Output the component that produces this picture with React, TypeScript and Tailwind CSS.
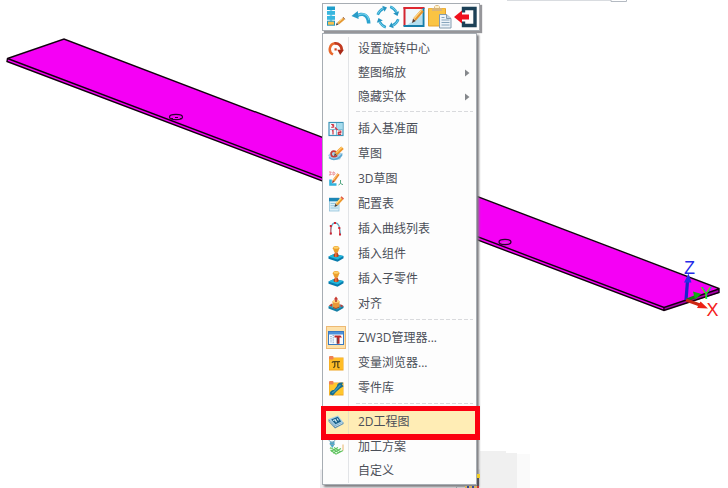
import React from "react";
import clsx from "clsx";

type IconProps = { children: React.ReactNode };

const Icon = ({ children }: IconProps) => (
  <svg width="16" height="16" viewBox="0 0 16 16" fill="none">
    {children}
  </svg>
);

const ToolIcon = ({ children }: IconProps) => (
  <svg width="24" height="24" viewBox="0 0 24 24" fill="none">
    {children}
  </svg>
);

const RotateIcon = () => (
  <Icon>
    <path d="M5 13.500A6 6 0 0 1 7.500 2.200" stroke="#e8682c" strokeWidth="2.500" />
    <path d="M6.500 2.400A6 6 0 0 1 13.600 9" stroke="#c23a20" strokeWidth="2.700" />
    <path d="M9.300 8.800h6.700l-3.800 5.200z" fill="#a92a18" />
    <rect x="6.500" y="7.300" width="2.200" height="2.200" fill="#d8431f" />
  </Icon>
);

const DatumIcon = () => (
  <Icon>
    <rect x="1" y="1.500" width="14" height="13" fill="#f1f9fd" stroke="#3c94b8" strokeWidth="1.200" />
    <rect x="9" y="2" width="5.500" height="6" fill="#a5dced" />
    <path d="M8.500 2v6.500H2M8.500 8.500h6M8.500 8.500V14" stroke="#7fbdd6" />
    <path d="M3.200 3.500h2.500v1.300H4.200h1.500v1.500H3.200" stroke="#cf3544" />
    <path d="M7 6.500l2.500 2.500" stroke="#cf3544" strokeWidth="1.400" />
    <path d="M4 10l1-.5v4M10.200 10h2.600v1.600h-2.500v1.700h2.800" stroke="#cf3544" strokeWidth="1.200" />
  </Icon>
);

const SketchIcon = () => (
  <Icon>
    <path d="M0 9.500L4.500 4.500l10.500 3-3 6-8 .5z" fill="#a6d0e8" />
    <path d="M1 11.500c3 2.800 9 3 13-3" stroke="#5aa6cf" strokeWidth="1.500" />
    <path d="M8 5.800C5 4 2.500 6 3.200 8.700s4 2.600 6 .6" stroke="#c63b35" strokeWidth="1.700" />
    <path d="M8 8L14.500 1.800" stroke="#ef9426" strokeWidth="3.600" />
    <path d="M8.300 6.800L14 1.200" stroke="#ffce6c" strokeWidth="1.200" />
    <path d="M6 10l.8-2.700 1.900 1.800z" fill="#5a3a2a" />
  </Icon>
);

const Sketch3DIcon = () => (
  <Icon>
    <path d="M1 1h2.300L2.200 2.300 3.300 3.500 1 4M5 1v3c2.600 0 2.600-3 0-3" stroke="#ea8a90" />
    <path d="M2.500 8.500v5h6" stroke="#30b2dc" strokeWidth="2.600" />
    <path d="M5.500 10L10.500 3" stroke="#ed8b31" strokeWidth="2.800" />
    <path d="M5.300 9L9.700 3" stroke="#ffd184" />
    <path d="M4 12.300l.6-3 2 1.500z" fill="#8d3935" />
    <path d="M12.500 9v3.500l2.500 1.200M12.500 12.500L10.500 14" stroke="#55a983" />
  </Icon>
);

const ConfigTableIcon = () => (
  <Icon>
    <rect x="1.500" y="2" width="9.500" height="13" fill="#dceff8" stroke="#92c2da" strokeWidth=".8" />
    <rect x="1" y="2" width="10.500" height="3.300" fill="#1c86b5" />
    <path d="M2.500 7.500h7.500M2.500 9.700h7.500M2.500 12h7.500" stroke="#8bc2dc" strokeWidth=".9" />
    <path d="M8.500 8.500l5.500-6" stroke="#eb9a2e" strokeWidth="3.200" />
    <path d="M8.200 7.500l5-5.300" stroke="#ffe08b" strokeWidth="1.200" />
    <path d="M6.500 11l.8-3.200 2.200 1.900z" fill="#4a403b" />
    <path d="M13 .8l2.500 2.300" stroke="#e35943" strokeWidth="1.500" />
  </Icon>
);

const CurveIcon = () => (
  <Icon>
    <path d="M2.800 13.500C2.500 6 4 1.800 7 1.800c4 0 4.500 4 5.500 12" stroke="#69a9c2" strokeWidth="1.300" />
    <path d="M2.800 5v8M11.500 7v7" stroke="#e65056" strokeWidth=".9" />
    <g fill="#cf2330">
      <rect x="1.800" y="4" width="2" height="2" />
      <rect x="1.800" y="11.500" width="2" height="2" />
      <rect x="6" y="1" width="2" height="2" />
      <rect x="10.300" y="6" width="2" height="2" />
      <rect x="11" y="12.500" width="2" height="2" />
    </g>
  </Icon>
);

const StampIcon = () => (
  <Icon>
    <path d="M.5 10.500L6 8l9.500 2v2.300L9.500 15.700.5 12.800z" fill="#087bac" />
    <path d="M.5 10.500L6 8l9.500 2-6 3.500z" fill="#20b8dc" />
    <path d="M5.500 9.500l1.500-3h2.500l1.300 3c0 2.300-5.300 2.300-5.300 0z" fill="#b8401b" />
    <path d="M7 6h1.700v5H7z" fill="#e8703a" />
    <path d="M4.800 2.200c0-3 6.600-3 6.600 0L9.800 6.500H6.500z" fill="#eb9e2c" />
    <ellipse cx="8.100" cy="1.600" rx="2.800" ry="1.200" fill="#ffd36a" />
  </Icon>
);

const AlignIcon = () => (
  <Icon>
    <path d="M.5 10.500L7 7l8.500 3v2L9 15.700.5 12.500z" fill="#147fa5" />
    <path d="M.5 10.500L7 7l8.500 3L9 13.500z" fill="#36aac6" />
    <path d="M4.500 5.500c0-1.600 7-1.600 7 0v5c-1.500 2-5.500 2-7 0z" fill="#e9983a" />
    <ellipse cx="8" cy="5.500" rx="3.300" ry="1.300" fill="#ffd87c" />
    <path d="M8 2v4" stroke="#b13129" strokeWidth="1.500" />
    <path d="M5.800 3.500L8 .5l2.200 3zM.8 9.500l3.200-2v3.300zM12.500 8l3 2.300-3 .7z" fill="#c9392f" />
    <path d="M5 11.500l3 1 3.500-1.500" stroke="#a94625" />
  </Icon>
);

const ManagerIcon = () => (
  <Icon>
    <rect x=".5" y="1.500" width="15" height="13" fill="#f7fbff" stroke="#3979c2" />
    <rect x="1" y="2" width="14" height="2.500" fill="#4c91da" />
    <path d="M3 6v7M5.200 5v9" stroke="#6d91b8" strokeDasharray="1.200 1" />
    <path d="M6.500 7.500V5.500h6l1.500 2h-2.500v6.200H8.800V7.500z" fill="#bc2626" />
    <path d="M9.300 8v5.500" stroke="#5d4651" />
  </Icon>
);

const VariableIcon = () => (
  <Icon>
    <rect x="1" y="2.500" width="14.500" height="13" fill="#efa31f" />
    <rect x="1.500" y="3" width="13.500" height="11.500" fill="#ffbd26" />
    <rect x="1" y="1" width="4.500" height="3.500" rx="1" fill="#ef8052" />
    <path d="M4 7.800c.6-1.100 1-1.100 2-1.100h6M6.800 7v4L5.500 13M9.800 7v4.500c0 1 .5 1.300 1.700.8" stroke="#594819" strokeWidth="1.300" />
  </Icon>
);

const PartLibraryIcon = () => (
  <Icon>
    <rect x="1" y="2.500" width="14.500" height="13" fill="#efa522" />
    <rect x="1.500" y="3" width="13.500" height="11.500" fill="#ffc62c" />
    <rect x="1" y="1" width="4.500" height="3.500" rx="1" fill="#ed8055" />
    <path d="M2 14.500c-.5-3 1.500-4.500 4-4.500l3-4c0-2.800 3-4.300 6.200-3.200l-1.200 1.800 1.500 1.600-3.500 2.300L8 12l-3 3.500z" fill="#176d91" />
    <path d="M4 13c3.500-1.500 5-5 8.500-8" stroke="#3e9dbc" strokeWidth="1.300" />
  </Icon>
);

const DrawingIcon = () => (
  <Icon>
    <path d="M.5 5L10 1.500l5.500 7L7 13z" fill="#a4cee6" />
    <path d="M.5 5L7 11.500l8.500-3.200V10L7 14.500.5 7.500z" fill="#5a8eaf" />
    <path d="M3.200 5.500L9.800 2.800l3.400 4.700-5.700 2.800z" fill="#165e88" />
    <path d="M5 6.500l2.200-.8 1.300 2.500M9 4.500l1.500 2" stroke="#d9f0f8" strokeWidth="1.200" />
    <path d="M1.500 7l5.500 5.500 7.500-3.300" stroke="#e0edf4" strokeWidth=".8" />
  </Icon>
);

const MachiningIcon = () => (
  <Icon>
    <path d="M2.500 11l5.500 4.200 7-3.700M4 9.500l7 4.500M6 8.500l7 4.500M3 12.500l7-4M5 14l8-4.500" stroke="#5dc35c" strokeWidth="1.100" />
    <path d="M15 5.500v6" stroke="#e8b46a" />
    <path d="M2.500 2.500h4v3L4.500 9l-3-4z" fill="#4aa8cb" />
    <path d="M.5 1l3.500 3L7.500 1M2 5.500h4.500" stroke="#7aa3b5" />
    <path d="M1.500 9.500l1.500-2 1.500 3z" fill="#7fcf77" />
  </Icon>
);

const ListEditIcon = () => (
  <ToolIcon>
    <path d="M7 3v17" stroke="#78d2ec" strokeWidth="2.500" />
    <rect x="3" y="1.500" width="8" height="3.500" fill="#1f9ecb" />
    <rect x="3" y="6" width="8" height="3.800" fill="#38b6de" />
    <rect x="3" y="11" width="8" height="3.800" fill="#38b6de" />
    <rect x="3.500" y="16.200" width="7" height="4" fill="#f8c04e" stroke="#2498c2" />
    <path d="M14 18.500l6-5" stroke="#e59a34" strokeWidth="2.700" />
    <path d="M14.200 17.300l4.500-3.700" stroke="#ffd183" />
    <path d="M11.800 20.500l1-2.700 1.800 1.700z" fill="#4e4037" />
    <path d="M18.900 12l2 2.200" stroke="#9c6d55" />
  </ToolIcon>
);

const UndoIcon = () => (
  <ToolIcon>
    <path d="M20.500 18.500C20.500 9 13 5.500 6 9.500l1.500 3C12 9.500 16.500 11 17 18.500z" fill="#2ba3cf" />
    <path d="M19 15C17.500 8.500 12 7.500 7 10.500" stroke="#74cfe9" strokeWidth="1.200" />
    <path d="M1.500 11l6.300-5 .8 8z" fill="#2a9cc8" />
  </ToolIcon>
);

const RecycleIcon = () => (
  <ToolIcon>
    {[0, 90, 180, 270].map((angle) => (
      <g key={angle} transform={`rotate(${angle} 12 12)`}>
        <path d="M1.700 9.800C2.700 7 4.500 5 7.500 3.500" stroke="#2ba1cd" strokeWidth="2.600" />
        <path d="M2 8.800C3 6.500 4.500 4.700 7.300 3.300" stroke="#86d8ee" strokeWidth=".9" />
        <path d="M6.300.8l4.700 1.700-2.500 4.300z" fill="#2694c0" />
      </g>
    ))}
  </ToolIcon>
);

const EditBoxIcon = () => (
  <ToolIcon>
    <path d="M3 4h18v17H3z" fill="#f0f8fc" />
    <path d="M5 20L20 10v10z" fill="#b4dfef" />
    <path d="M1.500 3h21" stroke="#df2830" strokeWidth="2" />
    <path d="M2.500 2v19" stroke="#d32632" strokeWidth="2" />
    <path d="M1.500 21h21M21.500 3v19" stroke="#167eaa" strokeWidth="2" />
    <path d="M12.500 14.500L20.500 5.500" stroke="#e3952f" strokeWidth="3.400" />
    <path d="M12.200 13.500l7.300-8.300" stroke="#ffda8a" strokeWidth="1.200" />
    <path d="M10 18l1-4.200 2.800 2.300z" fill="#5c3c2d" />
  </ToolIcon>
);

const PasteIcon = () => (
  <ToolIcon>
    <rect x="0" y="3" width="18" height="18.500" rx="1" fill="#e6a22c" />
    <rect x="1" y="3.500" width="16" height="17" fill="#fac443" />
    <path d="M4 6V3h2c0-4 6-4 6 0h2v3z" fill="#d9b476" />
    <rect x="7" y="1" width="4" height="2" fill="#fff0c8" />
    <path d="M11.500 9.500h7l4.500 4v9.500H11.500z" fill="#edf3f8" stroke="#839bae" />
    <path d="M18.500 9.500v4h4.500" fill="#c4d4e3" stroke="#839bae" />
    <path d="M13.500 12.500h3M13.500 15h8M13.500 17.500h8M13.500 20h8" stroke="#87a5bc" />
  </ToolIcon>
);

const ExitIcon = () => (
  <ToolIcon>
    <path d="M9.500 7.500V3.500h11.500v17H9.500V16.500" stroke="#1b4056" strokeWidth="3.400" />
    <path d="M0 12l8-6.500v4h7v5H8v4z" fill="#f0101c" />
  </ToolIcon>
);

type MenuEntry = {
  label?: string;
  icon?: React.ReactNode;
  separator?: boolean;
  submenu?: boolean;
  compact?: boolean;
  checked?: boolean;
  active?: boolean;
};

const menuItems: MenuEntry[] = [
  { label: "设置旋转中心", icon: <RotateIcon />, compact: true },
  { label: "整图缩放", submenu: true, compact: true },
  { label: "隐藏实体", submenu: true, compact: true },
  { separator: true, compact: true },
  { label: "插入基准面", icon: <DatumIcon /> },
  { label: "草图", icon: <SketchIcon /> },
  { label: "3D草图", icon: <Sketch3DIcon /> },
  { label: "配置表", icon: <ConfigTableIcon /> },
  { label: "插入曲线列表", icon: <CurveIcon /> },
  { label: "插入组件", icon: <StampIcon /> },
  { label: "插入子零件", icon: <StampIcon /> },
  { label: "对齐", icon: <AlignIcon /> },
  { separator: true },
  { label: "ZW3D管理器...", icon: <ManagerIcon />, checked: true },
  { label: "变量浏览器...", icon: <VariableIcon /> },
  { label: "零件库", icon: <PartLibraryIcon /> },
  { separator: true },
  { label: "2D工程图", icon: <DrawingIcon />, active: true },
  { label: "加工方案", icon: <MachiningIcon /> },
  { label: "自定义", compact: true },
];

const MenuRow = ({ item }: { item: MenuEntry }) => {
  if (item.separator) {
    return (
      <div className={clsx("flex", item.compact ? "h-[7px]" : "h-[9px]")}>
        <div className="h-full w-[26px] border-r border-[#e2e4e7]" />
        <div
          className={clsx(
            "ml-[7px] h-px w-[117px] bg-[repeating-linear-gradient(90deg,#d9dadd_0_4px,transparent_4px_6px)]",
            item.compact ? "mt-[2px]" : "mt-[3px]"
          )}
        />
      </div>
    );
  }

  return (
    <div
      className={clsx(
        "relative flex items-center",
        item.compact ? "h-[24px]" : "h-[25px]",
        item.active && "bg-[#ffedb5]"
      )}
    >
      <div
        className={clsx(
          "flex h-full w-[26px] shrink-0 items-center justify-center border-r",
          item.active ? "border-[#eadfbd]" : "border-[#e2e4e7]"
        )}
      >
        <div
          className={clsx(
            "flex items-center justify-center",
            item.checked && "h-[23px] w-5 shrink-0 border border-[#edb974] bg-[#fde1aa]"
          )}
        >
          {item.icon}
        </div>
      </div>
      <span className="ml-[9px] whitespace-nowrap">{item.label}</span>
      {item.submenu && (
        <svg className="ml-auto mr-[6px]" width="5" height="8" viewBox="0 0 5 8">
          <path d="M0 0.500L4.500 4 0 7.500z" fill="#85888c" />
        </svg>
      )}
      {item.active && (
        <div className="absolute -left-[2px] -top-[3px] z-10 h-[34px] w-[159px] border-[5px] border-b-[6px] border-[#fb0010]" />
      )}
    </div>
  );
};

const ModelView = () => (
  <svg className="col-start-1 row-start-1" width="728" height="488" viewBox="0 0 728 488">
    <path d="M507 0h104v1.500h15.500V0" fill="none" stroke="#b4bac2" />
    <path d="M320 469.500h160V488H320z" fill="#ececef" />
    <path d="M480 451h26v2h11v35h-37z" fill="#f0f0f0" />
    <path d="M517 454h13v34h-13z" fill="#fafafa" />

    <path d="M7.500 59L64 39l655 250v3l-55 18.500L7 61.500z" fill="#f500f5" />
    <path d="M664 307.500l55-18v3.500l-55 17.500z" fill="#a900ac" />
    <path
      d="M7.500 58.500L64 39l655 249.500v4L664 310.500 7 61.500zM7.500 58.500L664 307.500l55-18.500M664 307v3.500"
      fill="none"
      stroke="#13000f"
      strokeWidth="1.400"
    />
    <g fill="none" stroke="#2a002d" strokeWidth="1.200">
      <ellipse cx="176" cy="117" rx="6.500" ry="2.600" />
      <path d="M171 118.500h2m2-1h3m2 1h2" />
      <ellipse cx="505" cy="242" rx="6" ry="2.600" />
      <path d="M502 243l6-1" stroke="#c65ccb" />
    </g>

    <path d="M686 300l1.500-19" stroke="#1c24ca" strokeWidth="3.200" />
    <path d="M688.500 273.500l-4.500 9h7.500z" fill="#2630e9" />
    <path d="M687 300l9-3.500" stroke="#137b13" strokeWidth="3.200" />
    <path d="M693 291.500l8.500 2.500-6.500 5.500z" fill="#12a916" />
    <path d="M686 300l14 5" stroke="#cb2814" strokeWidth="3" />
    <path d="M700.500 301.500l7.500 7-11-.5z" fill="#ed2115" />
    <g className="font-['Liberation_Sans']">
      <text x="684" y="274" fontSize="18" fill="#252be8">Z</text>
      <text x="700.500" y="299" fontSize="17" fill="#18df20">Y</text>
      <text x="706.500" y="316" fontSize="18" fill="#f42020">X</text>
    </g>
  </svg>
);

// corner of the toolbar that sits behind the menu
const CornerStrip = () => (
  <svg className="z-20 col-start-1 row-start-1 ml-[456px] self-end" width="24" height="14" viewBox="0 0 24 14">
    <path d="M21 0h2v14h-2z" fill="#55525c" />
    <path d="M21 0h3v4h-3z" fill="#f3cf25" />
    <path d="M.5 14v-1.500H9" fill="none" stroke="#9a9da0" />
    <path d="M9 12h12v2H9z" fill="#d9b45d" />
    <path d="M12 12v2m5-2v2" stroke="#334c9b" strokeWidth="2" />
    <path d="M21 12h2v2h-2z" fill="#c8373a" />
  </svg>
);

export default function App() {
  return (
    <main className="grid h-[488px] w-[728px] overflow-hidden bg-white">
      <ModelView />
      <div className="z-10 col-start-1 row-start-1 ml-[322px] mt-[3px] flex w-[158px] flex-col self-start">
        <div className="flex h-7 w-[158px] items-center gap-[2px] border border-[#a7adb3] bg-[#fdfdfd] pl-px shadow-[2px_2px_1px_#96969a]">
          <ListEditIcon />
          <UndoIcon />
          <RecycleIcon />
          <EditBoxIcon />
          <PasteIcon />
          <ExitIcon />
        </div>
        <div className="mt-[2px] h-[452px] w-[155px] border border-[#a7adb3] bg-[#fdfdfd] pt-[3px] font-['Open_Sans','Noto_Sans_CJK_SC',sans-serif] text-[12px] leading-[18px] text-[#4b4f58] shadow-[2px_2px_2px_#808083]">
          {menuItems.map((item, index) => (
            <MenuRow key={index} item={item} />
          ))}
        </div>
      </div>
      <CornerStrip />
    </main>
  );
}
